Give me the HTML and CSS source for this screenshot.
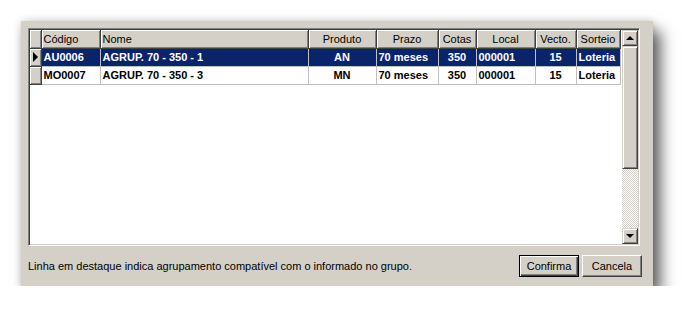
FILE: index.html
```html
<!DOCTYPE html>
<html lang="pt">
<head>
  <meta charset="UTF-8" />
  <title>Agrupamentos</title>
  <link rel="stylesheet" href="styles.css">
</head>
<body>
  <div class="dialog">
    <div class="grid-box">
      <table class="grid">
        <colgroup>
          <col class="c-ind"><col class="c-cod"><col class="c-nome"><col class="c-prod">
          <col class="c-prazo"><col class="c-cotas"><col class="c-local"><col class="c-vecto"><col class="c-sort">
        </colgroup>
        <thead>
          <tr>
            <th class="ind"></th>
            <th class="left">Código</th>
            <th class="left">Nome</th>
            <th>Produto</th>
            <th>Prazo</th>
            <th>Cotas</th>
            <th>Local</th>
            <th>Vecto.</th>
            <th>Sorteio</th>
          </tr>
        </thead>
        <tbody>
          <tr class="selected">
            <td class="ind"><span class="arrow"></span></td>
            <td>AU0006</td>
            <td>AGRUP. 70 - 350 - 1</td>
            <td class="center">AN</td>
            <td>70 meses</td>
            <td class="center">350</td>
            <td>000001</td>
            <td class="center">15</td>
            <td>Loteria</td>
          </tr>
          <tr>
            <td class="ind"></td>
            <td>MO0007</td>
            <td>AGRUP. 70 - 350 - 3</td>
            <td class="center">MN</td>
            <td>70 meses</td>
            <td class="center">350</td>
            <td>000001</td>
            <td class="center">15</td>
            <td>Loteria</td>
          </tr>
        </tbody>
      </table>
      <div class="scrollbar">
        <div class="sb-btn"><span class="tri up"></span></div>
        <div class="sb-thumb"></div>
        <div class="sb-track"></div>
        <div class="sb-btn"><span class="tri down"></span></div>
      </div>
    </div>
    <div class="footer">
      <span class="hint">Linha em destaque indica agrupamento compatível com o informado no grupo.</span>
      <div class="buttons">
        <button class="btn default">Confirma</button>
        <button class="btn">Cancela</button>
      </div>
    </div>
  </div>
</body>
</html>
```

FILE: styles.css
```css
* {
  box-sizing: border-box;
  margin: 0;
  padding: 0;
}

body {
  background: #fff;
  font-family: "Liberation Sans", Arial, sans-serif;
  font-size: 11px;
  color: #000;
  padding: 21px 0 0 21px;
}

.dialog {
  width: 632px;
  height: 265px;
  background: #d4d0c8;
  padding: 7px 11px 0 7px;
  box-shadow: 8px 10px 14px rgba(0, 0, 0, 0.6), 0 0 8px rgba(0, 0, 0, 0.18);
}

.grid-box {
  width: 612px;
  height: 218px;
  background: #fff;
  border-top: 1px solid #808080;
  border-left: 1px solid #808080;
  border-right: 1px solid #fff;
  border-bottom: 1px solid #fff;
  box-shadow: inset 1px 1px #404040, inset -1px -1px #d4d0c8;
  padding: 1px;
  display: flex;
  justify-content: space-between;
}

.grid {
  border-collapse: collapse;
  table-layout: fixed;
  width: 590px;
  align-self: flex-start;
}

.c-ind { width: 11px; }
.c-cod { width: 59px; }
.c-nome { width: 208px; }
.c-prod { width: 68px; }
.c-prazo { width: 62px; }
.c-cotas { width: 38px; }
.c-local { width: 59px; }
.c-vecto { width: 41px; }
.c-sort { width: 44px; }

.grid th {
  height: 18px;
  font-weight: normal;
  background: #d4d0c8;
  border-right: 1px solid #404040;
  border-bottom: 1px solid #404040;
  box-shadow: inset 1px 1px #fff, inset -1px -1px #808080;
  text-align: center;
  padding: 0 2px;
  white-space: nowrap;
  overflow: hidden;
}

.grid th.left {
  text-align: left;
}

.grid td {
  height: 18px;
  font-weight: bold;
  border-right: 1px solid #c0c0c0;
  border-bottom: 1px solid #c0c0c0;
  padding: 0 2px;
  white-space: nowrap;
  overflow: hidden;
}

.grid td.center {
  text-align: center;
}

.grid td.ind {
  background: #d4d0c8;
  border-right: 1px solid #404040;
  border-bottom: 1px solid #404040;
  box-shadow: inset 1px 1px #fff, inset -1px -1px #808080;
  padding: 0;
}

.selected td {
  background: #0a246a;
  color: #fff;
}

.arrow {
  display: block;
  width: 0;
  height: 0;
  margin-left: 3px;
  border-top: 5px solid transparent;
  border-bottom: 5px solid transparent;
  border-left: 5px solid #000;
}

.scrollbar {
  width: 16px;
  display: flex;
  flex-direction: column;
}

.sb-btn,
.sb-thumb {
  background: #d4d0c8;
  border-top: 1px solid #d4d0c8;
  border-left: 1px solid #d4d0c8;
  border-right: 1px solid #404040;
  border-bottom: 1px solid #404040;
  box-shadow: inset 1px 1px #fff, inset -1px -1px #808080;
}

.sb-btn {
  height: 16px;
  display: flex;
  justify-content: center;
  align-items: center;
}

.sb-thumb {
  height: 123px;
}

.sb-track {
  flex: 1;
  background: repeating-conic-gradient(#d4d0c8 0 25%, #fff 0 50%) 0 0 / 2px 2px;
}

.tri {
  width: 0;
  height: 0;
  border-left: 4px solid transparent;
  border-right: 4px solid transparent;
}

.tri.up {
  border-bottom: 4px solid #000;
}

.tri.down {
  border-top: 4px solid #000;
}

.footer {
  display: flex;
  justify-content: space-between;
  align-items: center;
  margin-top: 9px;
}

.buttons {
  display: flex;
  gap: 3px;
}

.btn {
  width: 60px;
  height: 22px;
  font-family: "Liberation Sans", Arial, sans-serif;
  font-size: 11px;
  color: #000;
  background: #d4d0c8;
  border-top: 1px solid #fff;
  border-left: 1px solid #fff;
  border-right: 1px solid #404040;
  border-bottom: 1px solid #404040;
  box-shadow: inset -1px -1px #808080;
}

.btn.default {
  border: 1px solid #000;
  box-shadow: inset 1px 1px #fff, inset -1px -1px #404040, inset -2px -2px #808080;
}
```
